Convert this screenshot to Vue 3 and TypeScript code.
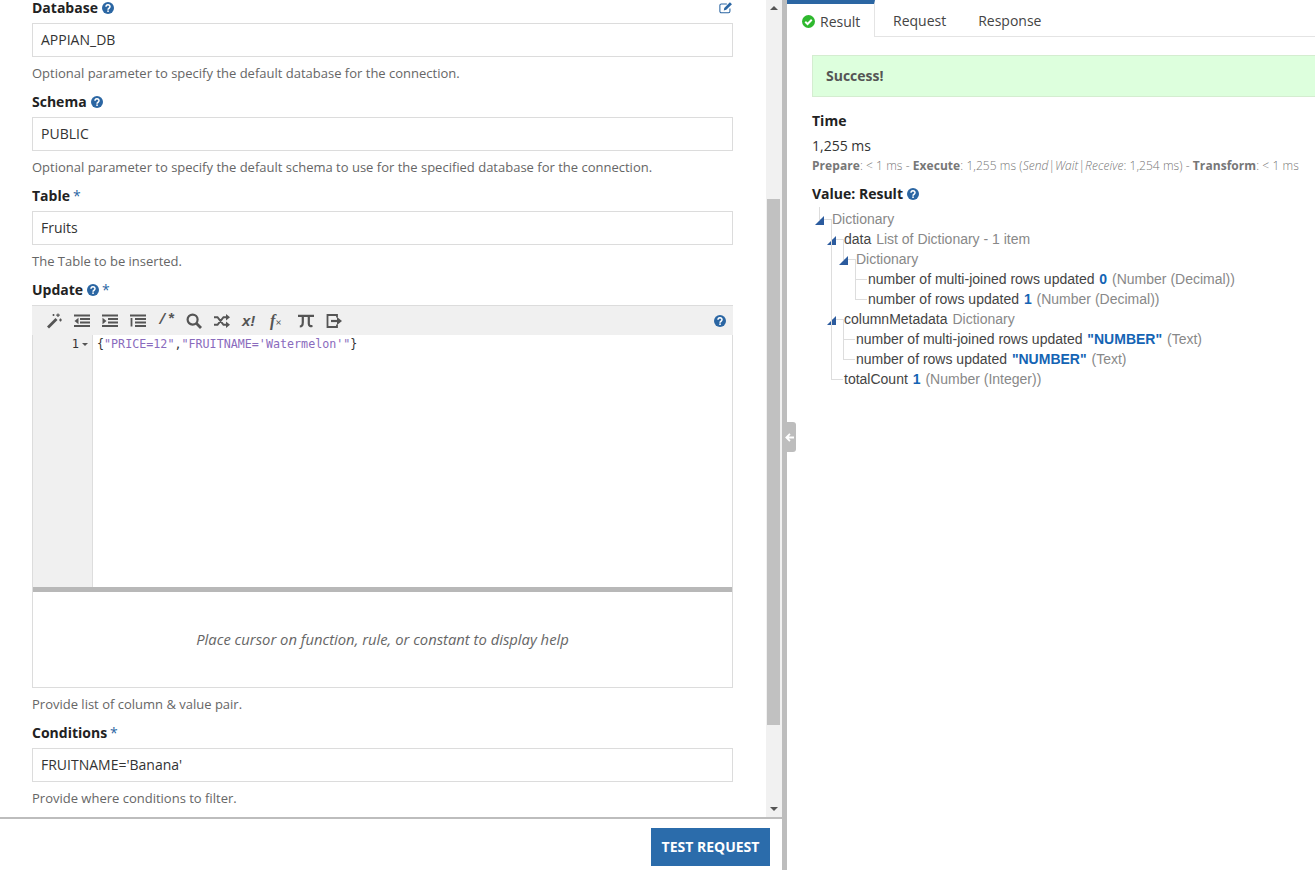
<script setup lang="ts">
import { computed } from 'vue'

interface Field { label: string; value: string; help: string; info: boolean; req: boolean }
const top: Field[] = [
  { label: 'Database', value: 'APPIAN_DB', help: 'Optional parameter to specify the default database for the connection.', info: true, req: false },
  { label: 'Schema', value: 'PUBLIC', help: 'Optional parameter to specify the default schema to use for the specified database for the connection.', info: true, req: false },
  { label: 'Table', value: 'Fruits', help: 'The Table to be inserted.', info: false, req: true },
]
const tabs = computed(() => ['Request', 'Response'])
</script>

<template>
  <div class="page">
    <section class="left">
      <div class="scroller">
        <div class="form">
          <div v-for="(f, i) in top" :key="f.label" class="field">
            <div class="label">
              <span>{{ f.label }}</span>
              <svg v-if="f.info" class="info" viewBox="0 0 16 16"><circle cx="8" cy="8" r="8" fill="#2b66a3"/><path d="M5.300 6.200a2.700 2.500 0 1 1 4.100 2.100c-.9.500-1.400.9-1.400 1.900" fill="none" stroke="#fff" stroke-width="2"/><rect x="7" y="11.200" width="2.100" height="2.100" fill="#fff"/></svg>
              <span v-if="f.req" class="req">*</span>
              <svg v-if="i === 0" class="edit" viewBox="0 0 16 14"><path d="M12.500 8v3.300a1.700 1.700 0 0 1-1.700 1.700H2.700A1.700 1.700 0 0 1 1 11.300V4.700A1.700 1.700 0 0 1 2.700 3h6.300" fill="none" stroke="#2b66a3" stroke-width="1.200"/><path d="M6 7.500 12.500 1l2.300 2.200-6.500 6.500-2.800.6z" fill="#2b66a3"/></svg>
            </div>
            <div class="input">{{ f.value }}</div>
            <div class="help">{{ f.help }}</div>
          </div>

          <div class="field">
            <div class="label">
              <span>Update</span>
              <svg class="info" viewBox="0 0 16 16"><circle cx="8" cy="8" r="8" fill="#2b66a3"/><path d="M5.300 6.200a2.700 2.500 0 1 1 4.100 2.100c-.9.500-1.400.9-1.400 1.900" fill="none" stroke="#fff" stroke-width="2"/><rect x="7" y="11.200" width="2.100" height="2.100" fill="#fff"/></svg>
              <span class="req">*</span>
            </div>
            <div class="editor">
              <div class="toolbar">
                <svg class="tool" viewBox="0 0 16 16"><path d="M1 13.500 9.500 5l2 2L3 15.500z" fill="#555"/><path d="M12 .5v3.500M10.200 2.200h3.600M14.500 5.500v3M13 7h3M7.500 1v2M6.500 2h2" stroke="#555" stroke-width="1.200"/></svg>
                <svg class="tool" viewBox="0 0 16 16"><path d="M0 2.500h16M6 6h10M6 9.500h10M0 13h16" stroke="#555" stroke-width="1.800"/><path d="M4.500 4.800v6.400L0.500 8z" fill="#555"/></svg>
                <svg class="tool" viewBox="0 0 16 16"><path d="M0 2.500h16M6 6h10M6 9.500h10M0 13h16" stroke="#555" stroke-width="1.800"/><path d="M.5 4.800v6.400L4.500 8z" fill="#555"/></svg>
                <svg class="tool" viewBox="0 0 16 16"><path d="M0 2.500h16M5 6h11M5 9.500h11M5 13h11" stroke="#555" stroke-width="1.800"/><path d="M1.500 5v8.500" stroke="#555" stroke-width="1.800"/></svg>
                <span class="tool-text">/*</span>
                <svg class="tool" viewBox="0 0 16 16"><circle cx="6.600" cy="6.600" r="5" fill="none" stroke="#555" stroke-width="2.200"/><path d="m10.300 10.300 4.700 4.700" stroke="#555" stroke-width="2.800"/></svg>
                <svg class="tool" viewBox="0 0 16 16"><path d="M0 4.200h3.500l6 7.600h3M0 11.800h3.500l6-7.600h3" fill="none" stroke="#555" stroke-width="2"/><path d="M12 1 16 4.200 12 7.400zM12 8.600l4 3.200-4 3.200z" fill="#555"/></svg>
                <span class="tool-x">x!</span>
                <span class="tool-f">f<small>×</small></span>
                <svg class="tool" viewBox="0 0 16 16"><path d="M0 2.800h16M4.800 2.800v6.400q0 4.300-3 4.300M10.800 2.800v8q0 2.700 3.700 2.200" fill="none" stroke="#555" stroke-width="2.200"/></svg>
                <svg class="tool" viewBox="0 0 16 16"><path d="M11 4.500V2H1.500v12H11v-2.500" fill="none" stroke="#555" stroke-width="1.800"/><path d="M5 8h7" stroke="#555" stroke-width="2.200"/><path d="M11 4 16 8l-5 4z" fill="#555"/></svg>
                <svg class="info tool-help" viewBox="0 0 16 16"><circle cx="8" cy="8" r="8" fill="#2b66a3"/><path d="M5.300 6.200a2.700 2.500 0 1 1 4.100 2.100c-.9.500-1.400.9-1.400 1.900" fill="none" stroke="#fff" stroke-width="2"/><rect x="7" y="11.200" width="2.100" height="2.100" fill="#fff"/></svg>
              </div>
              <div class="code">
                <div class="gutter"><span>1</span><i class="fold"></i></div>
                <div class="lines"><span class="pn">{</span><span class="str">"PRICE=12"</span><span class="pn">,</span><span class="str">"FRUITNAME='Watermelon'"</span><span class="pn">}</span></div>
              </div>
              <div class="docs">Place cursor on function, rule, or constant to display help</div>
            </div>
            <div class="help">Provide list of column &amp; value pair.</div>
          </div>

          <div class="field">
            <div class="label"><span>Conditions</span><span class="req">*</span></div>
            <div class="input">FRUITNAME='Banana'</div>
            <div class="help">Provide where conditions to filter.</div>
          </div>
        </div>
        <div class="scrollbar">
          <i class="arrow up"></i>
          <div class="track"><div class="thumb"></div></div>
          <i class="arrow down"></i>
        </div>
      </div>
      <div class="footer"><button class="test">TEST REQUEST</button></div>
    </section>

    <div class="splitter"><div class="handle"><svg viewBox="0 0 10 10"><path d="M5.500 1 1.500 5l4 4M2 5h8" fill="none" stroke="#fff" stroke-width="2"/></svg></div></div>

    <section class="right">
      <div class="tabs">
        <div class="tab active">
          <svg class="check" viewBox="0 0 16 16"><circle cx="8" cy="8" r="8" fill="#2eb82e"/><path d="m4 8.300 2.800 2.800 5.200-5.300" fill="none" stroke="#fff" stroke-width="2.400"/></svg>
          Result
        </div>
        <div v-for="t in tabs" :key="t" class="tab">{{ t }}</div>
      </div>
      <div class="results">
        <div class="success">Success!</div>
        <h3 class="time-h">Time</h3>
        <div class="time">1,255 ms</div>
        <div class="timing"><b>Prepare</b>: &lt; 1 ms - <b>Execute</b>: 1,255 ms (<em>Send</em>|<em>Wait</em>|<em>Receive</em>: 1,254 ms) - <b>Transform</b>: &lt; 1 ms</div>
        <h3 class="value-h">Value: Result
          <svg class="info" viewBox="0 0 16 16"><circle cx="8" cy="8" r="8" fill="#2b66a3"/><path d="M5.300 6.200a2.700 2.500 0 1 1 4.100 2.100c-.9.500-1.400.9-1.400 1.900" fill="none" stroke="#fff" stroke-width="2"/><rect x="7" y="11.200" width="2.100" height="2.100" fill="#fff"/></svg>
        </h3>
        <ul class="tree root">
          <li class="node open"><span class="ty">Dictionary</span>
            <ul class="tree">
              <li class="node open"><span class="k">data</span> <span class="ty">List of Dictionary - 1 item</span>
                <ul class="tree">
                  <li class="node open"><span class="ty">Dictionary</span>
                    <ul class="tree">
                      <li class="node"><span class="k">number of multi-joined rows updated</span> <b class="n">0</b> <span class="ty">(Number (Decimal))</span></li>
                      <li class="node"><span class="k">number of rows updated</span> <b class="n">1</b> <span class="ty">(Number (Decimal))</span></li>
                    </ul>
                  </li>
                </ul>
              </li>
              <li class="node open"><span class="k">columnMetadata</span> <span class="ty">Dictionary</span>
                <ul class="tree">
                  <li class="node"><span class="k">number of multi-joined rows updated</span> <b class="n">"NUMBER"</b> <span class="ty">(Text)</span></li>
                  <li class="node"><span class="k">number of rows updated</span> <b class="n">"NUMBER"</b> <span class="ty">(Text)</span></li>
                </ul>
              </li>
              <li class="node"><span class="k">totalCount</span> <b class="n">1</b> <span class="ty">(Number (Integer))</span></li>
            </ul>
          </li>
        </ul>
      </div>
    </section>
  </div>
</template>

<style>
html, body { margin: 0; overflow: hidden; background: #fff; }
</style>

<style scoped>
.page { display: flex; width: 1315px; height: 870px; overflow: hidden; font-family: "Open Sans", sans-serif; color: #333; font-size: 14px; }
.left { width: 782px; display: flex; flex-direction: column; flex: none; }
.scroller { height: 817px; display: flex; overflow: hidden; }
.form { width: 766px; flex: none; box-sizing: border-box; padding: 0 33px 0 32px; margin-top: -4px; }
.label { position: relative; display: flex; align-items: center; height: 23px; margin-bottom: 4px; font-weight: 700; font-size: 14px; color: #222; gap: 3px; }
.info { width: 12px; height: 12px; flex: none; margin-left: 1px; }
.req { color: #2b66a3; font-weight: 400; font-size: 14px; }
.edit { position: absolute; right: 0; top: 5px; width: 14px; height: 13px; }
.input { box-sizing: border-box; height: 34px; border: 1px solid #dcdcdc; padding: 0 8px; line-height: 32px; font-size: 14px; color: #333; }
.help { height: 33px; padding-top: 7px; box-sizing: border-box; line-height: 18px; font-size: 13px; color: #666; }
.editor { border: 1px solid #dcdcdc; border-top: none; box-sizing: border-box; height: 383px; display: flex; flex-direction: column; }
.toolbar { height: 30px; flex: none; background: #f0f0f0; display: flex; align-items: center; box-sizing: border-box; border-top: 1px solid #dcdcdc; margin: 0 -1px; padding-left: 14px; }
.tool { width: 16px; height: 16px; margin-right: 12px; flex: none; }
.tool-text { font: 700 15px "Liberation Mono", monospace; color: #555; width: 28px; flex: none; }
.tool-x { font: italic 700 15px "Liberation Sans", sans-serif; color: #555; width: 28px; flex: none; }
.tool-f { font: italic 700 16px "Liberation Serif", serif; color: #555; width: 28px; flex: none; }
.tool-f small { font-size: 11px; }
.tool-help { margin-left: auto; margin-right: 7px; }
.code { height: 252px; flex: none; display: flex; border-bottom: 5px solid #b8b8b8; }
.gutter { width: 59px; flex: none; background: #f0f0f0; border-right: 1px solid #ddd; position: relative; font: 12px/18px "DejaVu Sans Mono", monospace; color: #333; }
.gutter span { position: absolute; right: 13px; top: 0; }
.fold { position: absolute; right: 4px; top: 8px; width: 0; height: 0; border: 3px solid transparent; border-top: 3px solid #555; border-bottom: none; }
.lines { padding-left: 4px; font: 11.7px/18px "DejaVu Sans Mono", monospace; color: #333; }
.str { color: #8a6bbd; }
.pn { color: #333; }
.docs { flex: 1; display: flex; align-items: center; justify-content: center; font-style: italic; color: #666; font-size: 14.8px; padding-bottom: 2px; }
.scrollbar { width: 16px; flex: none; background: #f1f1f1; display: flex; flex-direction: column; align-items: center; }
.track { flex: 1; width: 100%; padding-top: 183px; box-sizing: border-box; }
.thumb { height: 526px; margin: 0 2px 0 1px; background: #c1c1c1; }
.arrow { flex: none; width: 0; height: 0; margin: 6px 0; border: 4px solid transparent; }
.arrow.up { border-top: none; border-bottom: 4px solid #555; }
.arrow.down { border-bottom: none; border-top: 4px solid #555; }
.footer { flex: 1; border-top: 2px solid #bdbdbd; display: flex; justify-content: flex-end; align-items: flex-start; padding: 9px 12px 0 0; }
.test { width: 119px; height: 38px; background: #2b6cab; border: none; color: #fff; font: 700 14px "Open Sans", sans-serif; padding: 0 0 2px; }
.splitter { position: relative; width: 5px; flex: none; background: #bdbdbd; }
.handle { position: absolute; left: 1px; top: 422px; width: 13px; height: 30px; background: #bdbdbd; border-radius: 0 3px 3px 0; display: flex; align-items: center; justify-content: center; }
.handle svg { width: 9px; height: 9px; }
.right { flex: 1; min-width: 0; }
.tabs { display: flex; height: 37px; border-bottom: 1px solid #e4e4e4; box-sizing: border-box; }
.tab { padding: 6px 16px 0; line-height: 30px; font-size: 14px; color: #444; }
.tab.active { width: 88px; box-sizing: border-box; padding: 2px 0 0 15px; border-top: 4px solid #2b66a3; border-right: 1px solid #e4e4e4; height: 37px; margin: 0 2px -1px 0; background: #fff; display: flex; align-items: center; gap: 5px; }
.check { width: 13px; height: 13px; }
.results { padding: 18px 0 0 25px; }
.success { height: 42px; box-sizing: border-box; background: #dfd; border: 1px solid #d4edd0; border-right: none; line-height: 40px; padding-left: 13px; font-weight: 700; color: #555; }
.time-h { margin: 14px 0 0; font-size: 14px; line-height: 20px; font-weight: 700; color: #222; }
.time { margin-top: 5px; line-height: 20px; font-size: 14px; color: #333; }
.timing { font-size: 12px; font-weight: 300; letter-spacing: .06px; line-height: 16px; color: #777; margin-top: 2px; white-space: nowrap; }
.timing b { font-weight: 700; color: #777; }
.value-h { margin: 10px 0 0; font-size: 14px; line-height: 20px; font-weight: 700; color: #222; display: flex; align-items: center; gap: 3px; }
.tree { list-style: none; margin: 0; padding: 0 0 0 12px; font: 14px/20px "Liberation Sans", sans-serif; color: #555; }
.root { padding-left: 20px; margin-top: 5px; }
.node { position: relative; white-space: nowrap; }
.node::before { content: ""; position: absolute; left: -13px; top: -10px; width: 11px; height: 20px; border-left: 1px solid #ddd; border-bottom: 1px solid #ddd; }
.root > .node::before { top: -2px; height: 12px; }
.node:not(:last-child)::after { content: ""; position: absolute; left: -13px; top: 0; bottom: 0; border-left: 1px solid #ddd; }
.open > .ty:first-child, .open > .k:first-child { position: relative; }
.open > :first-child::before { content: ""; position: absolute; left: -17px; top: 5px; width: 0; height: 0; border-style: solid; border-width: 0 0 9px 9px; border-color: transparent transparent #2b5b9e transparent; }
.ty { color: #888; }
.k { color: #444; margin-right: 1px; }
.n { color: #1464b4; font-weight: 700; margin-right: 1px; }
</style>
